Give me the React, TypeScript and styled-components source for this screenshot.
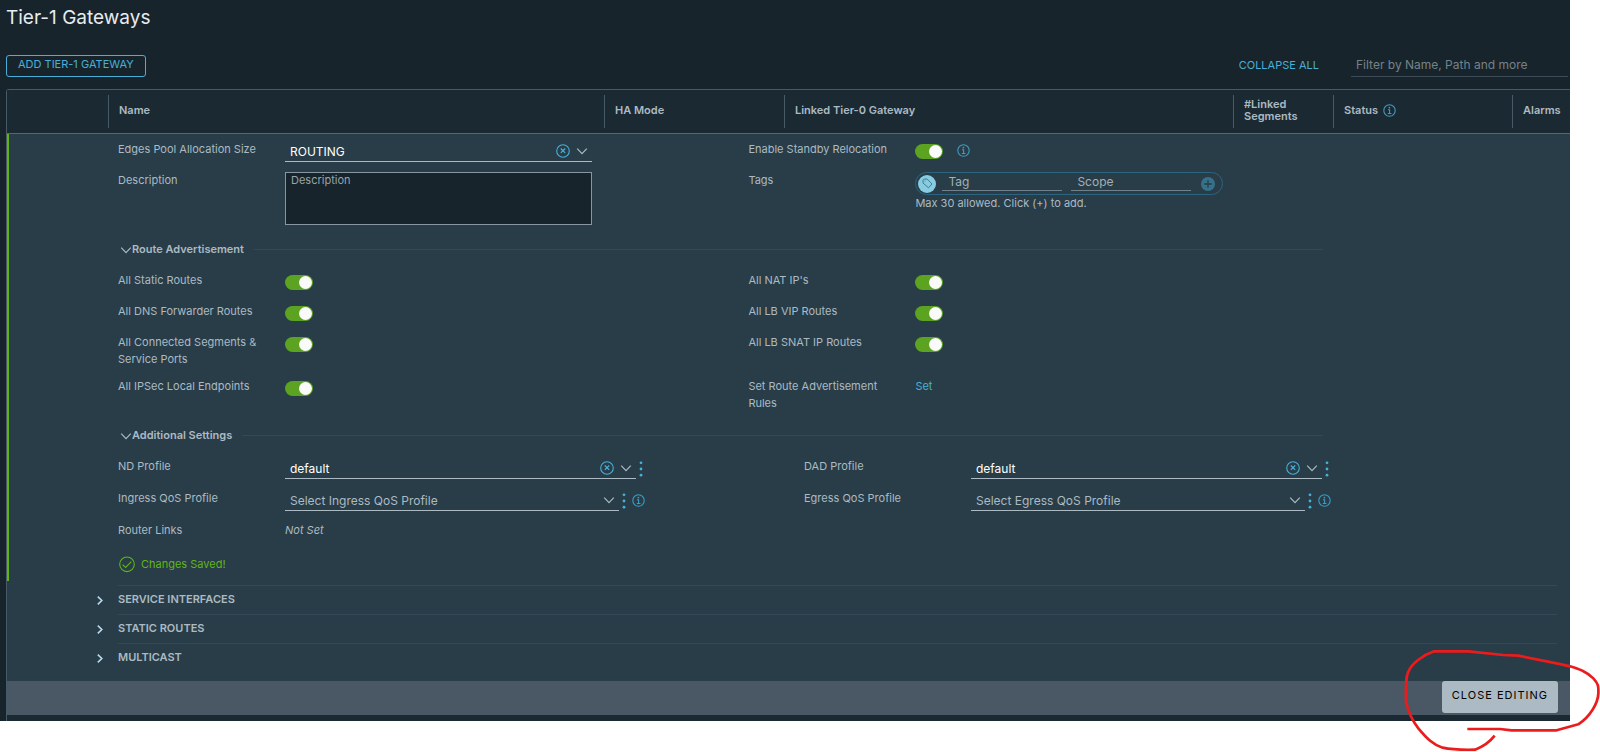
import React, { useState } from "react";
import styled, { createGlobalStyle, css } from "styled-components";

const c = {
  page: "#17242b",
  header: "#1b2a32",
  detail: "#283d48",
  border: "#485a66",
  rule: "#324a57",
  line: "#acbac3",
  text: "#acbac3",
  bright: "#e9ecef",
  link: "#49afd9",
  icon: "#3d9cc4",
  green: "#5ba320",
  mark: "#60b515",
};

const Global = createGlobalStyle`
  *, *::before, *::after { box-sizing: border-box; }
  body {
    margin: 0;
    background: #fff;
    font-family: Inter, "Liberation Sans", sans-serif;
    font-size: 11px;
    line-height: 17px;
    color: ${c.text};
  }
  button, input, select, textarea { font: inherit; color: inherit; margin: 0; padding: 0; border: 0; background: none; outline: none; }
  button { cursor: pointer; }
  svg { display: block; flex: none; }
`;

const Shell = styled.div`
  position: relative;
  min-height: 752px;
  padding-right: 30px;
`;
const Page = styled.main`
  background: ${c.page};
  padding-left: 6px;
`;
const Title = styled.h1`
  margin: 0;
  padding: 5px 0 0;
  font-size: 19px;
  line-height: 25px;
  font-weight: 400;
  color: ${c.bright};
`;
const Toolbar = styled.div`
  display: flex;
  align-items: center;
  padding: 24px 2px 12px 0;
`;
const OutlineButton = styled.button`
  height: 22px;
  padding: 0 11px 2px;
  border: 1px solid ${c.link};
  border-radius: 3px;
  color: ${c.link};
`;
const TextButton = styled.button`
  margin-left: auto;
  color: ${c.link};
`;
const FilterInput = styled.input`
  width: 217px;
  height: 23px;
  margin-left: 32px;
  padding: 0 5px 2px;
  border-bottom: 1px solid #3d4c56;
  font-size: 12px;
  &::placeholder { color: #75828a; opacity: 1; }
`;

const Grid = styled.table`
  width: 100%;
  table-layout: fixed;
  border-collapse: separate;
  border-spacing: 0;
  border: 1px solid ${c.border};
  border-width: 1px 0 0 1px;
  border-top-left-radius: 3px;
`;
const HeadCell = styled.th`
  height: 44px;
  padding: 5px 0;
  background: ${c.header};
  border-bottom: 1px solid #556772;
  text-align: left;
  font-weight: 600;
  line-height: 12px;
`;
const HeadLabel = styled.div<{ $divided?: boolean }>`
  display: flex;
  align-items: center;
  gap: 5px;
  height: 33px;
  padding: 0 0 3px 10px;
  ${(p) => p.$divided && css`border-left: 1px solid ${c.border};`}
`;
const DetailCell = styled.td`
  padding: 0;
  background: ${c.detail};
`;
const FormPane = styled.div`
  border-left: 2px solid ${c.mark};
  padding: 7px 80px 8px 109px;
`;
const FieldGrid = styled.div<{ $columns: string; $gap: number }>`
  display: grid;
  grid-template-columns: ${(p) => p.$columns};
  row-gap: ${(p) => p.$gap}px;
`;
const Field = styled.div`
  display: grid;
  grid-template-columns: 150px 1fr;
  column-gap: 17px;
  min-height: 21px;
  align-items: start;
`;
const Controls = styled.div`
  display: flex;
  align-items: center;
`;
const SectionHead = styled.div`
  display: flex;
  align-items: center;
  gap: 10px;
  width: 1205px;
  max-width: 100%;
  margin: 15px 0 14px;
  &::after { content: ""; flex: 1; height: 1px; background: ${c.rule}; }
`;
const SectionButton = styled.button`
  display: flex;
  align-items: center;
  padding-left: 2px;
  font-weight: 600;
`;
const SelectBox = styled.div<{ $width: number }>`
  display: flex;
  align-items: center;
  gap: 6px;
  width: ${(p) => p.$width}px;
  height: 21px;
  padding-right: 4px;
  border-bottom: 1px solid ${c.line};
`;
const SelectInput = styled.select<{ $empty?: boolean }>`
  appearance: none;
  flex: 1;
  min-width: 0;
  padding-left: 5px;
  font-size: 12px;
  color: ${(p) => (p.$empty ? c.text : "#fff")};
`;
const IconButton = styled.button`
  display: flex;
  align-items: center;
  justify-content: center;
  color: ${c.link};
`;
const Kebab = styled(IconButton)`
  width: 10px;
  height: 20px;
`;
const InfoButton = styled(IconButton)<{ $gap: number }>`
  margin-left: ${(p) => p.$gap}px;
  color: ${c.icon};
`;
const DescriptionBox = styled.textarea`
  display: block;
  width: 307px;
  height: 53px;
  margin-bottom: 1px;
  padding: 0 5px;
  border: 1px solid #8796a0;
  background: ${c.page};
  line-height: 15px;
  resize: none;
  &::placeholder { color: #99a3a9; opacity: 1; }
`;
const Toggle = styled.input`
  appearance: none;
  display: block;
  width: 28px;
  height: 15px;
  margin-top: 3px;
  padding: 1px;
  border-radius: 8px;
  background: #5b6b75;
  cursor: pointer;
  &::before {
    content: "";
    display: block;
    width: 13px;
    height: 13px;
    border-radius: 50%;
    background: #fafafa;
  }
  &:checked { background: ${c.green}; }
  &:checked::before { margin-left: 13px; }
`;
const TagPill = styled.div`
  display: flex;
  align-items: center;
  width: 308px;
  height: 23px;
  padding: 0 7px 0 2px;
  border: 1px solid #2d6480;
  border-radius: 12px;
`;
const TagBadge = styled.span`
  display: flex;
  align-items: center;
  justify-content: center;
  width: 18px;
  height: 18px;
  border-radius: 50%;
  background: #89cbdf;
  color: #3d7f9c;
`;
const TagInput = styled.input`
  flex: 1;
  min-width: 0;
  height: 17px;
  margin: 0 3px 2px 6px;
  padding: 0 0 1px 6px;
  border-bottom: 1px solid #70818b;
  font-size: 12px;
  &::placeholder { color: #a3b0b8; opacity: 1; }
`;
const AddTag = styled(IconButton)`
  margin-left: 7px;
  color: #367089;
`;
const TextLink = styled.a`
  color: ${c.link};
  text-decoration: none;
`;
const Saved = styled.p`
  display: flex;
  align-items: center;
  gap: 6px;
  margin: 13px 0 0;
  padding-left: 1px;
  color: ${c.mark};
`;
const Accordions = styled.div`
  padding: 4px 13px 9px 85px;
`;
const AccordionButton = styled.button`
  display: flex;
  align-items: stretch;
  width: 100%;
  height: 29px;
  text-align: left;
  font-weight: 600;
`;
const AccordionChevron = styled.span`
  display: flex;
  align-items: center;
  width: 26px;
  padding: 2px 0 0 5px;
  color: #b9dbe9;
`;
const AccordionLabel = styled.span`
  flex: 1;
  padding-top: 5px;
  border-top: 1px solid ${c.rule};
`;
const Footer = styled.div`
  display: flex;
  align-items: flex-start;
  justify-content: flex-end;
  height: 34px;
  padding-right: 12px;
  background: #495864;
`;
const CloseButton = styled.button`
  height: 32px;
  padding: 0 10px 3px;
  border-radius: 3px;
  background: #acbac3;
  color: #000;
  letter-spacing: 1px;
`;
const EmptyCell = styled.td`
  height: 6px;
  padding: 0;
  background: ${c.header};
`;
const Annotation = styled.svg`
  position: absolute;
  top: 570px;
  right: 0;
  pointer-events: none;
`;

const Info = () => (
  <svg width="13" height="13" viewBox="0 0 13 13" fill="none" stroke="currentColor">
    <circle cx="6.5" cy="6.5" r="5.7" strokeWidth="1.1" />
    <path d="M5 5.7h1.6v3.8M4.8 9.5h3.6" strokeWidth="1.1" />
    <circle cx="6.4" cy="3.6" r=".9" fill="currentColor" stroke="none" />
  </svg>
);
const Clear = () => (
  <svg width="14" height="14" viewBox="0 0 14 14" fill="none" stroke="currentColor">
    <circle cx="7" cy="7" r="6.3" strokeWidth="1.1" />
    <path d="M4.8 4.5l4.4 4.4M9.2 4.5L4.8 8.9" strokeWidth="1.2" />
  </svg>
);
const Down = () => (
  <svg width="12" height="12" viewBox="0 0 12 12" fill="none" stroke="currentColor" strokeWidth="1.2">
    <path d="M1.2 3.6L6 8.6l4.8-5" />
  </svg>
);
const Right = () => (
  <svg width="6" height="9" viewBox="0 0 6 9" fill="none" stroke="currentColor" strokeWidth="1.6">
    <path d="M.8 .7l4 3.8-4 3.8" />
  </svg>
);
const Dots = () => (
  <svg width="4" height="16" viewBox="0 0 4 16" fill="currentColor">
    <circle cx="2" cy="1.8" r="1.4" />
    <circle cx="2" cy="8" r="1.4" />
    <circle cx="2" cy="14.2" r="1.4" />
  </svg>
);
const TagIcon = () => (
  <svg width="11" height="11" viewBox="0 0 11 11" fill="none" stroke="currentColor" strokeLinejoin="round">
    <path d="M1 2.2L2.2 1h2.9l4.9 5-3.5 3.8L1 5z" />
    <circle cx="3" cy="3" r=".5" fill="currentColor" stroke="none" />
  </svg>
);
const Plus = () => (
  <svg width="14" height="14" viewBox="0 0 14 14">
    <circle cx="7" cy="7" r="7" fill="currentColor" />
    <path d="M7 3.2v7.6M3.2 7h7.6" stroke={c.detail} strokeWidth="1.3" />
  </svg>
);
const Check = () => (
  <svg width="16" height="17" viewBox="0 0 16 17" fill="none" stroke="currentColor" strokeWidth="1.1">
    <circle cx="8" cy="8.3" r="7.3" />
    <path d="M3.6 8.6l3 2.9 5.8-5.8" />
  </svg>
);

function ToggleField({ id, label }: { id: string; label: string }) {
  const [on, setOn] = useState(true);
  return (
    <Field>
      <label htmlFor={id}>{label}</label>
      <Toggle id={id} type="checkbox" checked={on} onChange={() => setOn(!on)} />
    </Field>
  );
}

type SelectFieldProps = {
  id: string;
  label: string;
  value: string;
  width: number;
  empty?: boolean;
  menu?: boolean;
};

function SelectField({ id, label, value, width, empty, menu }: SelectFieldProps) {
  return (
    <Field>
      <label htmlFor={id}>{label}</label>
      <Controls>
        <SelectBox $width={width}>
          <SelectInput id={id} $empty={empty} defaultValue={value}>
            <option>{value}</option>
          </SelectInput>
          {!empty && <IconButton type="button" aria-label={`Clear ${label}`}><Clear /></IconButton>}
          <Down />
        </SelectBox>
        {menu && <Kebab type="button" aria-label={`${label} actions`}><Dots /></Kebab>}
        {menu && empty && <InfoButton $gap={3} type="button" aria-label={`About ${label}`}><Info /></InfoButton>}
      </Controls>
    </Field>
  );
}

const columns = [
  { label: "", width: 101 },
  { label: "Name" },
  { label: "HA Mode", width: 180 },
  { label: "Linked Tier-0 Gateway", width: 449 },
  { label: "#Linked Segments", width: 100 },
  { label: "Status", width: 179, info: true },
  { label: "Alarms", width: 58 },
];

export default function App() {
  return (
    <Shell>
      <Global />
      <Page>
        <Title>Tier-1 Gateways</Title>
        <Toolbar>
          <OutlineButton type="button">ADD TIER-1 GATEWAY</OutlineButton>
          <TextButton type="button">COLLAPSE ALL</TextButton>
          <FilterInput aria-label="Filter" placeholder="Filter by Name, Path and more" />
        </Toolbar>
        <Grid>
          <colgroup>
            {columns.map((col) => <col key={col.label} width={col.width} />)}
          </colgroup>
          <thead>
            <tr>
              {columns.map((col) => (
                <HeadCell key={col.label} scope="col">
                  <HeadLabel $divided={col.label !== ""}>
                    {col.label}
                    {col.info && <InfoButton $gap={0} type="button" aria-label="About status"><Info /></InfoButton>}
                  </HeadLabel>
                </HeadCell>
              ))}
            </tr>
          </thead>
          <tbody>
            <tr>
              <DetailCell colSpan={columns.length}>
                <FormPane>
                  <FieldGrid $columns="17fr 20fr" $gap={10}>
                    <SelectField id="pool" label="Edges Pool Allocation Size" value="ROUTING" width={307} />
                    <Field>
                      <label htmlFor="standby">Enable Standby Relocation</label>
                      <Controls>
                        <Toggle id="standby" type="checkbox" defaultChecked />
                        <InfoButton $gap={14} type="button" aria-label="About standby relocation"><Info /></InfoButton>
                      </Controls>
                    </Field>
                    <Field>
                      <label htmlFor="description">Description</label>
                      <DescriptionBox id="description" placeholder="Description" />
                    </Field>
                    <Field>
                      <label htmlFor="tag">Tags</label>
                      <div>
                        <TagPill>
                          <TagBadge><TagIcon /></TagBadge>
                          <TagInput id="tag" placeholder="Tag" />
                          <TagInput aria-label="Scope" placeholder="Scope" />
                          <AddTag type="button" aria-label="Add tag"><Plus /></AddTag>
                        </TagPill>
                        Max 30 allowed. Click (+) to add.
                      </div>
                    </Field>
                  </FieldGrid>

                  <SectionHead>
                    <SectionButton type="button" aria-expanded><Down />Route Advertisement</SectionButton>
                  </SectionHead>
                  <FieldGrid $columns="17fr 20fr" $gap={10}>
                    <ToggleField id="static" label="All Static Routes" />
                    <ToggleField id="nat" label="All NAT IP's" />
                    <ToggleField id="dns" label="All DNS Forwarder Routes" />
                    <ToggleField id="vip" label="All LB VIP Routes" />
                    <ToggleField id="connected" label="All Connected Segments & Service Ports" />
                    <ToggleField id="snat" label="All LB SNAT IP Routes" />
                    <ToggleField id="ipsec" label="All IPSec Local Endpoints" />
                    <Field>
                      <span>Set Route Advertisement Rules</span>
                      <TextLink href="#rules">Set</TextLink>
                    </Field>
                  </FieldGrid>

                  <SectionHead>
                    <SectionButton type="button" aria-expanded><Down />Additional Settings</SectionButton>
                  </SectionHead>
                  <FieldGrid $columns="1fr 1fr" $gap={11}>
                    <SelectField id="nd" label="ND Profile" value="default" width={351} menu />
                    <SelectField id="dad" label="DAD Profile" value="default" width={351} menu />
                    <SelectField id="ingress" label="Ingress QoS Profile" value="Select Ingress QoS Profile" width={334} empty menu />
                    <SelectField id="egress" label="Egress QoS Profile" value="Select Egress QoS Profile" width={334} empty menu />
                    <Field>
                      <span>Router Links</span>
                      <em>Not Set</em>
                    </Field>
                  </FieldGrid>
                  <Saved role="status"><Check />Changes Saved!</Saved>
                </FormPane>
                <Accordions>
                  {["SERVICE INTERFACES", "STATIC ROUTES", "MULTICAST"].map((name) => (
                    <AccordionButton key={name} type="button" aria-expanded={false}>
                      <AccordionChevron><Right /></AccordionChevron>
                      <AccordionLabel>{name}</AccordionLabel>
                    </AccordionButton>
                  ))}
                </Accordions>
                <Footer>
                  <CloseButton type="button">CLOSE EDITING</CloseButton>
                </Footer>
              </DetailCell>
            </tr>
            <tr><EmptyCell colSpan={columns.length} /></tr>
          </tbody>
        </Grid>
      </Page>
      <Annotation width="240" height="182" viewBox="0 0 720 546" fill="none" stroke="#ea1c1c" strokeWidth="8" strokeLinejoin="round" aria-hidden>
        <path d="M322 477H420L455 481H590L655 463C690 440 714 400 715 370C716 348 714 340 700 325C680 305 660 298 630 289L590 280L475 257L430 255L325 244H222C190 255 155 280 145 305C138 320 137 340 138 395C145 425 155 450 175 475C200 505 220 525 248 533C280 540 300 540 345 539C370 530 390 515 404 497" />
      </Annotation>
    </Shell>
  );
}
